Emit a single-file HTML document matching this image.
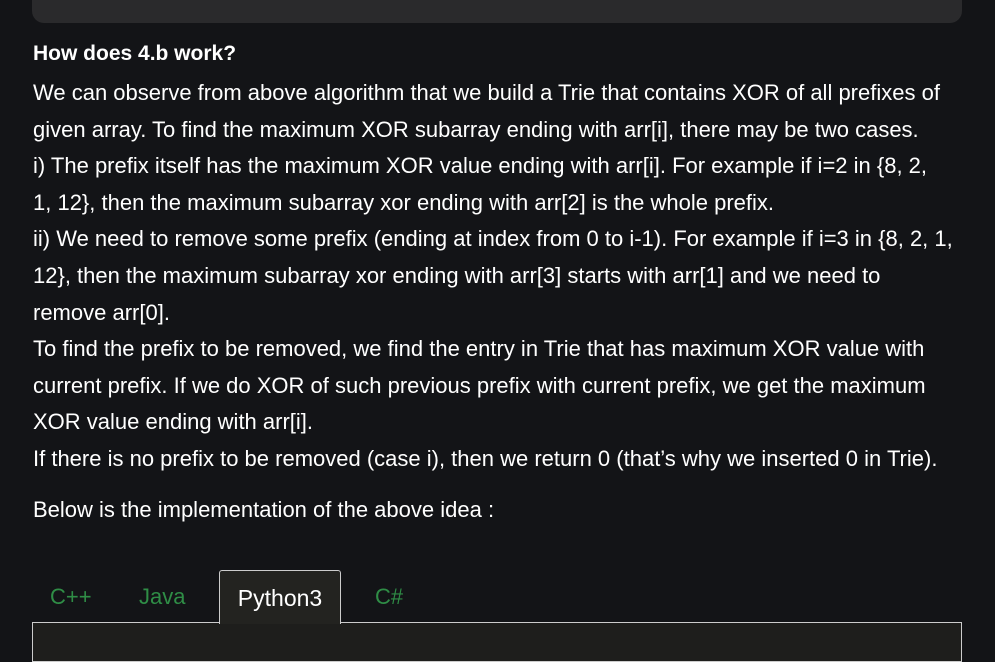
<!DOCTYPE html>
<html><head><meta charset="utf-8"><style>
html,body{margin:0;padding:0;background:#131417;width:995px;height:633px;overflow:hidden;font-family:"Liberation Sans",sans-serif;color:#fff}
.top{position:absolute;left:32px;top:-20px;width:930px;height:43px;background:#2a2a2c;border-radius:0 0 12px 12px}
.h{position:absolute;left:33px;top:42px;font-weight:bold;font-size:21px}
.p{position:absolute;left:33px;top:75px;font-size:22px;line-height:36.6px;white-space:nowrap}
.b{position:absolute;left:33px;top:497px;font-size:22px;white-space:nowrap}
.tab{position:absolute;top:584px;font-size:22px;color:#2f8d46}
.act{position:absolute;left:219px;top:570px;width:122px;height:54px;background:#232320;border:1px solid #ccc;border-bottom:none;border-radius:3px 3px 0 0;color:#fff;font-size:23px;text-align:center;line-height:54px;box-sizing:border-box;z-index:2}
.code{position:absolute;left:32px;top:622px;width:930px;height:40px;border:1px solid #ccc;background:#1e1e1c;box-sizing:border-box}
</style></head><body>
<div class="top"></div>
<div class="h">How does 4.b work?</div>
<div class="p">We can observe from above algorithm that we build a Trie that contains XOR of all prefixes of<br>given array. To find the maximum XOR subarray ending with arr[i], there may be two cases.<br>i) The prefix itself has the maximum XOR value ending with arr[i]. For example if i=2 in {8, 2,<br>1, 12}, then the maximum subarray xor ending with arr[2] is the whole prefix.<br>ii) We need to remove some prefix (ending at index from 0 to i-1). For example if i=3 in {8, 2, 1,<br>12}, then the maximum subarray xor ending with arr[3] starts with arr[1] and we need to<br>remove arr[0].<br>To find the prefix to be removed, we find the entry in Trie that has maximum XOR value with<br>current prefix. If we do XOR of such previous prefix with current prefix, we get the maximum<br>XOR value ending with arr[i].<br>If there is no prefix to be removed (case i), then we return 0 (that’s why we inserted 0 in Trie).</div>
<div class="b">Below is the implementation of the above idea :</div>
<div class="tab" style="left:50px">C++</div>
<div class="tab" style="left:139px">Java</div>
<div class="act">Python3</div>
<div class="tab" style="left:375px">C#</div>
<div class="code"></div>
</body></html>
